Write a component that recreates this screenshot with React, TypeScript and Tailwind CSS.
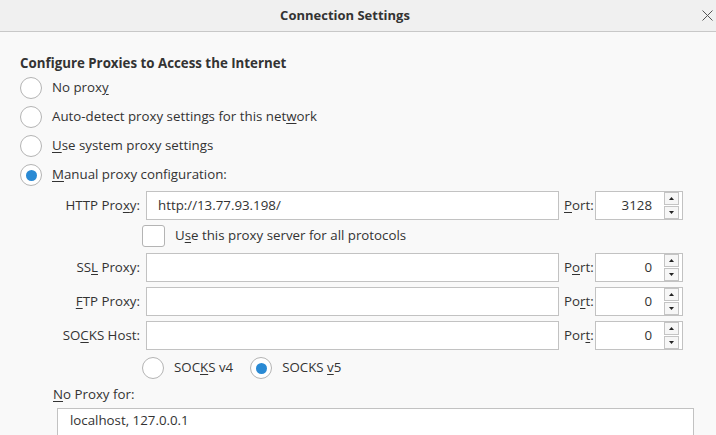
import React from "react";

const font = { fontFamily: '"Segoe UI", "Open Sans", "Noto Sans", sans-serif' };

function U({ children }: { children: React.ReactNode }) {
  return <span className="underline underline-offset-2 decoration-1">{children}</span>;
}

function Radio({ checked }: { checked?: boolean }) {
  return (
    <span className="flex h-[22px] w-[22px] shrink-0 items-center justify-center rounded-full border border-[#b4b4b4] bg-white">
      {checked && <span className="h-[11px] w-[11px] rounded-full bg-[#2a8ad4]" />}
    </span>
  );
}

function Spinner() {
  return (
    <div className="flex flex-col gap-px">
      <div className="flex h-[13px] w-[15px] items-center justify-center border border-[#c4c4c4] bg-[#f6f6f6]">
        <svg width="5" height="3" viewBox="0 0 5 3"><path d="M2.5 0L5 3H0z" fill="#222" /></svg>
      </div>
      <div className="flex h-[13px] w-[15px] items-center justify-center border border-[#c4c4c4] bg-[#f6f6f6]">
        <svg width="5" height="3" viewBox="0 0 5 3"><path d="M0 0H5L2.5 3z" fill="#222" /></svg>
      </div>
    </div>
  );
}

function ProxyRow({
  label,
  value,
  port,
  portLabel,
}: {
  label: React.ReactNode;
  value?: string;
  port: string;
  portLabel: React.ReactNode;
}) {
  return (
    <div className="flex h-[29px] items-center">
      <div className="w-[141px] shrink-0 pr-[1px] text-right">{label}</div>
      <div className="ml-[5px] flex h-full w-[413px] items-center border border-[#c2c2c2] bg-white pl-[11px]">
        {value}
      </div>
      <div className="ml-[5px] w-[31px]">{portLabel}</div>
      <div className="flex h-full w-[88px] items-center justify-between border border-[#c2c2c2] bg-white pl-2 pr-[3px]">
        <span className="flex-1 pr-[12px] text-right">{port}</span>
        <Spinner />
      </div>
    </div>
  );
}

export default function App() {
  return (
    <div
      className="h-[435px] w-[716px] overflow-hidden bg-[#f9f9f9] text-[13.3px] text-[#333]"
      style={font}
    >
      <div className="relative flex h-[32px] items-center justify-center border-b border-[#c8c8c8] bg-[#f0f0f0] pr-[26px]">
        <span className="text-[13px] font-bold text-[#333]">Connection Settings</span>
        <svg className="absolute right-[3px] top-[10px]" width="11" height="11" viewBox="0 0 11 11">
          <path d="M0.5 0.5L10.5 10.5M10.5 0.5L0.5 10.5" stroke="#555" strokeWidth="1" />
        </svg>
      </div>

      <div className="pl-[20px] pt-[21px]">
        <div className="font-bold leading-[20px]">Configure Proxies to Access the Internet</div>
        <div className="mt-[4px] flex flex-col gap-[7px]">
          <div className="flex items-center gap-[10px]">
            <Radio />
            <span>No prox<U>y</U></span>
          </div>
          <div className="flex items-center gap-[10px]">
            <Radio />
            <span>Auto-detect proxy settings for this net<U>w</U>ork</span>
          </div>
          <div className="flex items-center gap-[10px]">
            <Radio />
            <span><U>U</U>se system proxy settings</span>
          </div>
          <div className="flex items-center gap-[10px]">
            <Radio checked />
            <span><U>M</U>anual proxy configuration:</span>
          </div>
        </div>
      </div>

      <div className="mt-[5px] flex flex-col">
        <ProxyRow
          label={<>HTTP Pro<U>x</U>y:</>}
          value="http://13.77.93.198/"
          port="3128"
          portLabel={<><U>P</U>ort:</>}
        />
        <div className="mt-[5px] flex items-center pl-[142px]">
          <span className="h-[22px] w-[23px] rounded-[3px] border border-[#b4b4b4] bg-white" />
          <span className="ml-[10px]">U<U>s</U>e this proxy server for all protocols</span>
        </div>
        <div className="mt-[6px] flex flex-col gap-[5px]">
          <ProxyRow label={<>SS<U>L</U> Proxy:</>} port="0" portLabel={<>P<U>o</U>rt:</>} />
          <ProxyRow label={<><U>F</U>TP Proxy:</>} port="0" portLabel={<>Po<U>r</U>t:</>} />
          <ProxyRow label={<>SO<U>C</U>KS Host:</>} port="0" portLabel={<>Por<U>t</U>:</>} />
        </div>
        <div className="mt-[7px] flex items-center pl-[142px]">
          <Radio />
          <span className="ml-[10px]">SOC<U>K</U>S v4</span>
          <span className="ml-[17px]"><Radio checked /></span>
          <span className="ml-[10px]">SOCKS <U>v</U>5</span>
        </div>
        <div className="ml-[53px] mt-[6px]"><U>N</U>o Proxy for:</div>
        <div className="ml-[57px] mt-[3px] h-[40px] w-[637px] border border-[#c2c2c2] bg-white pl-[12px] pt-[2px]">
          localhost, 127.0.0.1
        </div>
      </div>
    </div>
  );
}
